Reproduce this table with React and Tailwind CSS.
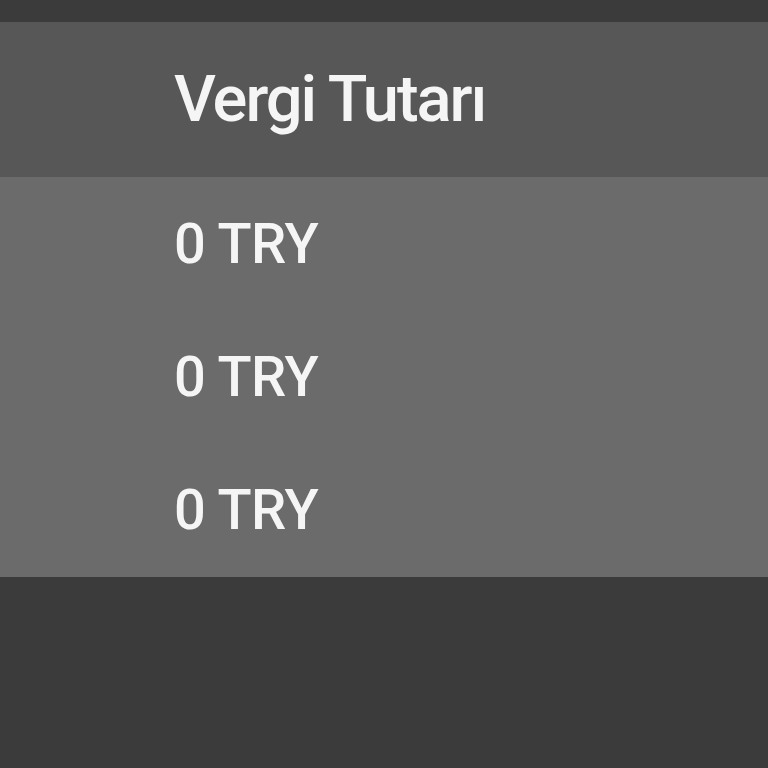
export default function App() {
  const rows = ["0 TRY", "0 TRY", "0 TRY"];
  return (
    <div
      className="w-[768px] h-[768px] bg-[#3b3b3b] flex flex-col overflow-hidden"
      style={{ fontFamily: "Roboto, 'Liberation Sans', sans-serif" }}
    >
      <div className="h-[22px] shrink-0" />
      <div className="h-[155px] shrink-0 bg-[#575757] flex items-center pl-[174px]">
        <span className="text-[65px] leading-none font-medium text-[#f5f5f5] tracking-[-2px]">
          Vergi Tutarı
        </span>
      </div>
      <div className="h-[400px] shrink-0 bg-[#6b6b6b] grid grid-rows-3">
        {rows.map((r, i) => (
          <div key={i} className="flex items-center pl-[174px]">
            <span className="text-[56px] leading-none font-medium text-[#f5f5f5] tracking-[-0.5px]">
              {r}
            </span>
          </div>
        ))}
      </div>
    </div>
  );
}
